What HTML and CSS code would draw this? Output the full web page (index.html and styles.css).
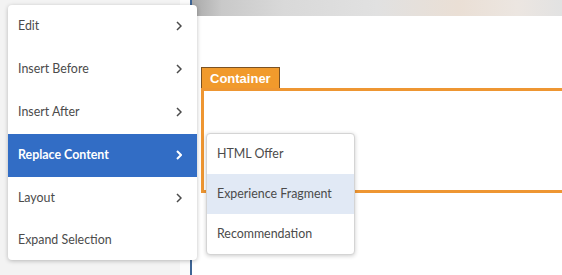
FILE: index.html
```html
<!DOCTYPE html>
<html lang="en">
<head>
  <meta charset="UTF-8">
  <title>Replace Content</title>
  <link rel="stylesheet" href="styles.css">
</head>
<body>
  <div class="sidebar"></div>
  <div class="gutter"></div>
  <div class="rail"></div>
  <div class="page">
    <div class="banner"></div>
    <div class="container-label">Container</div>
    <div class="container-box"></div>
  </div>

  <ul class="menu">
    <li class="item">Edit <svg class="chev" viewBox="0 0 6 10"><polyline points="1,1 5,5 1,9" /></svg></li>
    <li class="item">Insert Before <svg class="chev" viewBox="0 0 6 10"><polyline points="1,1 5,5 1,9" /></svg></li>
    <li class="item">Insert After <svg class="chev" viewBox="0 0 6 10"><polyline points="1,1 5,5 1,9" /></svg></li>
    <li class="item active">Replace Content <svg class="chev" viewBox="0 0 6 10"><polyline points="1,1 5,5 1,9" /></svg></li>
    <li class="item">Layout <svg class="chev" viewBox="0 0 6 10"><polyline points="1,1 5,5 1,9" /></svg></li>
    <li class="item last">Expand Selection</li>
  </ul>

  <ul class="submenu">
    <li class="sub-item">HTML Offer</li>
    <li class="sub-item hover">Experience Fragment</li>
    <li class="sub-item">Recommendation</li>
  </ul>
</body>
</html>
```

FILE: styles.css
```css
body {
  margin: 0;
  height: 275px;
  display: flex;
  overflow: hidden;
  background: #fff;
  font-family: 'Lato', sans-serif;
}

.sidebar {
  flex: 0 0 180px;
  background-color: #f3f3f3;
}

.gutter {
  flex: 0 0 10px;
  background-color: #fbfbfb;
}

.rail {
  flex: 0 0 2px;
  background-color: #3f6696;
}

.page {
  flex: 1;
  min-width: 0;
  overflow: hidden;
  display: flex;
  flex-direction: column;
  align-items: flex-start;
}

.banner {
  align-self: stretch;
  height: 16px;
  background: linear-gradient(90deg, #a9a9a9, #c9c9c9 8%, #d9d9d9 25%, #e1e1e1 50%, #eadfd5 72%, #ece6e1 88%, #e2e2e2);
}

/* Orange editable container */
.container-label {
  margin: 51px 0 0 9px;
  padding: 0 8px;
  height: 20px;
  line-height: 21px;
  background-color: #f19a2c;
  border: 1px solid #7a5224;
  border-bottom: none;
  color: #fff;
  font-family: 'Liberation Sans', Arial, sans-serif;
  font-weight: bold;
  font-size: 13px;
}

.container-box {
  flex-shrink: 0;
  margin-left: 9px;
  width: 400px;
  height: 99px;
  border: 3px solid #ee9632;
}

/* Context menu */
.menu {
  position: absolute;
  left: 8px;
  top: 5px;
  width: 189px;
  margin: 0;
  padding: 0;
  list-style: none;
  background: #fff;
  border-radius: 4px;
  box-shadow: 0 1px 4px rgba(0, 0, 0, 0.25);
  overflow: hidden;
}

.item {
  box-sizing: border-box;
  height: 43px;
  display: flex;
  align-items: center;
  justify-content: space-between;
  padding: 0 15px 2px 10px;
  font-size: 12.4px;
  color: #4b4b4b;
}

.item.last {
  height: 40px;
}

.item.active {
  background-color: #326dc5;
  color: #fff;
  font-weight: bold;
}

.chev {
  width: 6px;
  height: 10px;
  fill: none;
  stroke: #4b4b4b;
  stroke-width: 1.5;
}

.item.active .chev {
  stroke: #fff;
  stroke-width: 2;
}

.submenu {
  position: absolute;
  left: 206px;
  top: 133px;
  width: 147px;
  margin: 0;
  padding: 0;
  list-style: none;
  background: #fff;
  border: 1px solid #d4d4d4;
  border-radius: 4px;
  box-shadow: 0 1px 4px rgba(0, 0, 0, 0.2);
  overflow: hidden;
}

.sub-item {
  height: 40px;
  line-height: 40px;
  padding-left: 10px;
  font-size: 12.4px;
  color: #4b4b4b;
}

.sub-item.hover {
  background-color: #e1e9f5;
}
```
